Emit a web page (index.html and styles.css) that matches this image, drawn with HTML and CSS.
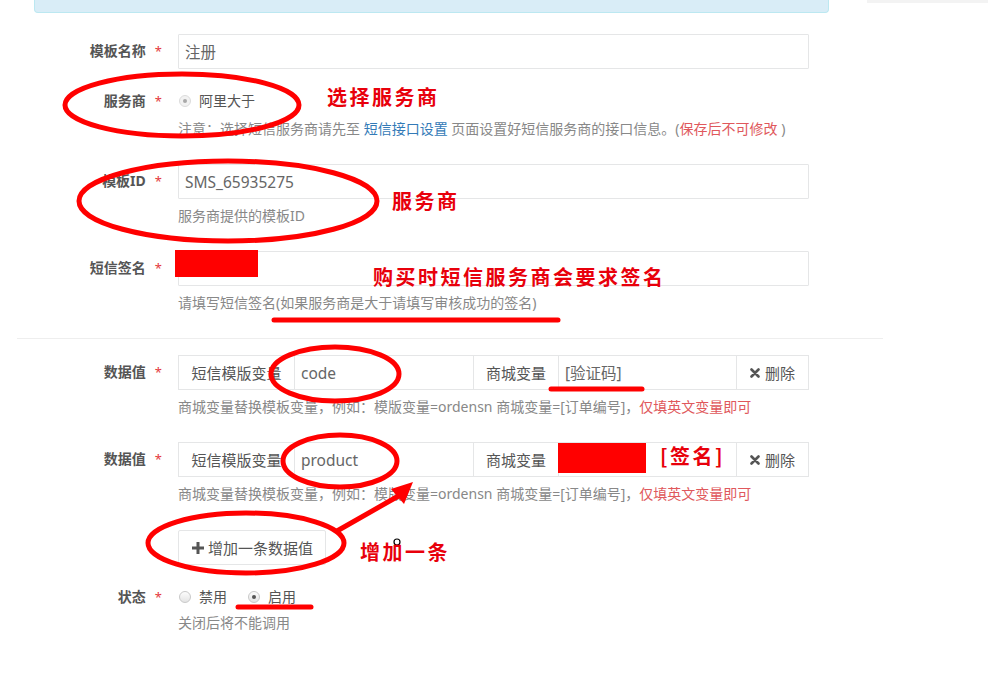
FILE: index.html
```html
<!DOCTYPE html>
<html lang="zh-CN">
	<head>
		<meta charset="UTF-8" />
		<meta name="viewport" content="width=device-width, initial-scale=1.0" />
		<title>短信模板</title>
		<link rel="stylesheet" href="styles.css">
	</head>
	<body>
		<div class="page-top">
			<div class="alert-info"></div>
			<div class="side-strip"></div>
		</div>
		<form class="form-horizontal">
			<div class="form-group">
				<label class="control-label">模板名称<span class="req">*</span></label>
				<div class="controls">
					<input type="text" class="form-control" value="注册" />
				</div>
			</div>
			<div class="form-group">
				<label class="control-label">服务商<span class="req">*</span></label>
				<div class="controls">
					<div class="radio-line">
						<span class="radio checked disabled"></span>
						<span class="radio-text">阿里大于</span>
					</div>
					<div class="help-block help-radio">注意：选择短信服务商请先至 <a href="#" class="link">短信接口设置</a> 页面设置好短信服务商的接口信息。(<span class="text-red">保存后不可修改 </span>)</div>
				</div>
			</div>
			<div class="form-group">
				<label class="control-label">模板ID<span class="req">*</span></label>
				<div class="controls">
					<input type="text" class="form-control" value="SMS_65935275" />
					<div class="help-block">服务商提供的模板ID</div>
				</div>
			</div>
			<div class="form-group">
				<label class="control-label">短信签名<span class="req">*</span></label>
				<div class="controls">
					<input type="text" class="form-control" value="" />
					<div class="help-block">请填写短信签名(如果服务商是大于请填写审核成功的签名)</div>
				</div>
			</div>
			<div class="line"></div>
			<div class="form-group">
				<label class="control-label">数据值<span class="req">*</span></label>
				<div class="controls">
					<div class="input-group">
						<span class="addon addon-tpl">短信模版变量</span>
						<input type="text" class="group-input input-tpl" value="code" />
						<span class="addon addon-shop">商城变量</span>
						<input type="text" class="group-input input-shop" value="[验证码]" />
						<button type="button" class="btn-del">
							<svg class="icon-x" viewBox="0 0 10 10"><path d="M1.5 1.5 L8.5 8.5 M8.5 1.5 L1.5 8.5" /></svg>删除
						</button>
					</div>
					<div class="help-block">商城变量替换模板变量，例如：模版变量=ordensn 商城变量=[订单编号]，<span class="text-red">仅填英文变量即可</span></div>
				</div>
			</div>
			<div class="form-group">
				<label class="control-label">数据值<span class="req">*</span></label>
				<div class="controls">
					<div class="input-group">
						<span class="addon addon-tpl">短信模版变量</span>
						<input type="text" class="group-input input-tpl" value="product" />
						<span class="addon addon-shop">商城变量</span>
						<input type="text" class="group-input input-shop" value="" />
						<button type="button" class="btn-del">
							<svg class="icon-x" viewBox="0 0 10 10"><path d="M1.5 1.5 L8.5 8.5 M8.5 1.5 L1.5 8.5" /></svg>删除
						</button>
					</div>
					<div class="help-block">商城变量替换模板变量，例如：模版变量=ordensn 商城变量=[订单编号]，<span class="text-red">仅填英文变量即可</span></div>
				</div>
			</div>
			<div class="form-group">
				<label class="control-label"></label>
				<div class="controls">
					<button type="button" class="btn-add">
						<svg class="icon-plus" viewBox="0 0 12 12"><path d="M4.5 0h3v4.5h4.5v3h-4.5v4.5h-3v-4.5h-4.5v-3h4.5z" /></svg>增加一条数据值
					</button>
				</div>
			</div>
			<div class="form-group">
				<label class="control-label">状态<span class="req">*</span></label>
				<div class="controls">
					<div class="radio-line">
						<span class="radio"></span>
						<span class="radio-text">禁用</span>
						<span class="radio checked"></span>
						<span class="radio-text">启用</span>
					</div>
					<div class="help-block help-status">关闭后将不能调用</div>
				</div>
			</div>
		</form>

		<!-- hand-drawn notes on top of the screenshot -->
		<svg class="notes" width="988" height="674" viewBox="0 0 988 674">
			<ellipse class="mark" cx="182" cy="105" rx="117" ry="31" />
			<ellipse class="mark" cx="228" cy="201" rx="149" ry="40" />
			<ellipse class="mark" cx="335" cy="374" rx="64" ry="27" />
			<ellipse class="mark" cx="340" cy="461" rx="57" ry="26" />
			<ellipse class="mark" cx="246" cy="543" rx="98" ry="30" />
			<rect class="fill" x="175" y="250" width="83" height="27" />
			<rect class="fill" x="558" y="443" width="88" height="30" />
			<line class="mark" x1="274" y1="320" x2="558" y2="320" />
			<line class="mark" x1="551" y1="389" x2="642" y2="389" />
			<line class="mark" x1="238" y1="607" x2="311" y2="607" />
			<line class="mark" x1="337" y1="531" x2="402" y2="494" />
			<polygon class="fill" points="413,482 391,489 404,504" />
			<circle class="cursor" cx="397" cy="542" r="3" />
			<text class="note" x="327" y="105">选择服务商</text>
			<text class="note" x="392" y="209">服务商</text>
			<text class="note" x="373" y="285">购买时短信服务商会要求签名</text>
			<text class="note" x="660" y="464">[签名]</text>
			<text class="note" x="360" y="560">增加一条</text>
		</svg>
	</body>
</html>
```

FILE: styles.css
```css
* {
	box-sizing: border-box;
}
body {
	margin: 0;
	width: 988px;
	height: 674px;
	overflow: hidden;
	position: relative;
	background: #fff;
	color: #676a6c;
	font-family: "Noto Sans", "Noto Sans CJK SC", sans-serif;
	font-size: 14px;
	line-height: 20px;
}
.page-top {
	display: flex;
	align-items: flex-start;
}
.alert-info {
	margin-left: 34px;
	width: 795px;
	height: 13px;
	background: #d9edf7;
	border: 1px solid #bce8f1;
	border-top: none;
	border-radius: 0 0 4px 4px;
}
.side-strip {
	margin-left: auto;
	width: 121px;
	height: 3px;
	background: #f3f3f3;
}
.form-horizontal {
	margin-top: 21px;
}
.form-group {
	display: flex;
	margin-bottom: 15px;
}
.control-label {
	flex: none;
	width: 162px;
	padding-top: 7px;
	text-align: right;
	font-weight: 700;
	color: #555;
}
.req {
	margin-left: 9px;
	color: #e4393c;
	font-weight: 400;
	font-size: 13px;
}
.controls {
	margin-left: 16px;
	width: 631px;
}
.form-control {
	display: block;
	width: 100%;
	height: 35px;
	padding: 0 6px;
	border: 1px solid #e5e6e7;
	border-radius: 1px;
	background: #fff;
	color: #666;
	font-family: "Noto Sans", "Noto Sans CJK SC", sans-serif;
	font-size: 15.5px;
	outline: none;
}
.help-block {
	margin-top: 7px;
	margin-bottom: 10px;
	color: #888;
	white-space: nowrap;
}
.help-radio {
	margin-top: 8px;
}
.help-status {
	margin-top: 6px;
	margin-bottom: 0;
}
.link {
	color: #337ab7;
	text-decoration: none;
}
.text-red {
	color: #e0585c;
}
.radio-line {
	display: flex;
	align-items: center;
	height: 20px;
	margin-top: 7px;
}
.radio {
	flex: none;
	position: relative;
	width: 12px;
	height: 12px;
	margin-left: 1px;
	border: 1px solid #c9c9c9;
	border-radius: 50%;
	background: linear-gradient(#fdfdfd, #e4e4e4);
}
.radio.checked::after {
	content: "";
	position: absolute;
	left: 3px;
	top: 3px;
	width: 4px;
	height: 4px;
	border-radius: 50%;
	background: #555;
}
.radio.disabled {
	border-color: #dcdcdc;
	background: #f2f2f2;
}
.radio.disabled::after {
	background: #a9a9a9;
}
.radio-text {
	margin-left: 8px;
	margin-right: 20px;
	color: #555;
	font-size: 14px;
}
.line {
	margin: 0 0 16px 17px;
	width: 866px;
	height: 1px;
	background: #eeeeee;
}
.input-group {
	display: flex;
	height: 35px;
}
.addon,
.group-input,
.btn-del {
	height: 35px;
	border: 1px solid #e5e6e7;
	background: #fff;
	color: #555;
	font-family: "Noto Sans", "Noto Sans CJK SC", sans-serif;
	font-size: 15px;
}
.addon {
	display: flex;
	align-items: center;
	justify-content: center;
	flex: none;
}
.addon-tpl {
	width: 117px;
}
.addon-shop {
	width: 86px;
	margin-left: -1px;
}
.group-input {
	padding: 0 6px;
	margin-left: -1px;
	color: #666;
	font-size: 15.5px;
	outline: none;
}
.input-tpl {
	width: 180px;
}
.input-shop {
	width: 179px;
}
.btn-del {
	display: flex;
	align-items: center;
	justify-content: center;
	width: 73px;
	margin-left: -1px;
	padding: 0;
	cursor: pointer;
}
.icon-x {
	width: 10px;
	height: 10px;
	margin-right: 5px;
	stroke: #555;
	stroke-width: 2.6;
	stroke-linecap: round;
	fill: none;
}
.btn-add {
	display: flex;
	align-items: center;
	height: 35px;
	padding: 0 12px 0 13px;
	margin-top: 1px;
	border: 1px solid #e5e6e7;
	border-radius: 2px;
	background: #fff;
	color: #555;
	font-family: "Noto Sans", "Noto Sans CJK SC", sans-serif;
	font-size: 15px;
	cursor: pointer;
}
.icon-plus {
	width: 12px;
	height: 12px;
	margin-right: 4px;
	fill: #555;
}
.notes {
	position: absolute;
	top: 0;
	left: 0;
	pointer-events: none;
}
.mark {
	fill: none;
	stroke: #ff0000;
	stroke-width: 5;
	stroke-linecap: round;
}
.fill {
	fill: #ff0000;
}
.cursor {
	fill: #fff;
	stroke: #000;
	stroke-width: 1.2;
}
.note {
	fill: #e8000b;
	font-family: "Noto Sans CJK SC", sans-serif;
	font-weight: 700;
	font-size: 20px;
	letter-spacing: 2.5px;
}
```
